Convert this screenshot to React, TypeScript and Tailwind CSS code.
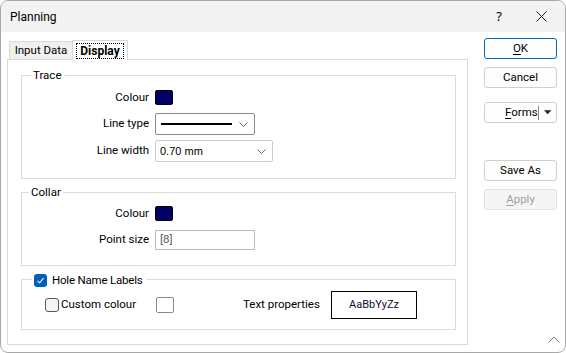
import React from "react";

const font = { fontFamily: 'Roboto, "Noto Sans", sans-serif' };

function Chevron({ className = "" }: { className?: string }) {
  return (
    <svg width="9" height="5" viewBox="0 0 9 5" className={className}>
      <path d="M0.5 0.5 L4.5 4.5 L8.5 0.5" fill="none" stroke="#6b6b6b" strokeWidth="1" />
    </svg>
  );
}

function Swatch({ color }: { color: string }) {
  return <div className="w-[18px] h-[15px] rounded-[2px] border border-black" style={{ background: color }} />;
}

function Button({ children, primary = false, disabled = false, className = "" }: { children: React.ReactNode; primary?: boolean; disabled?: boolean; className?: string }) {
  return (
    <div
      className={
        "h-[21px] w-[73px] rounded-[3px] flex items-center justify-center text-[11.5px] " +
        (primary
          ? "border border-[#0067c0] bg-[#fdfdfd] text-black"
          : disabled
          ? "border border-[#e2e2e2] bg-[#f5f5f5] text-[#a0a0a0]"
          : "border border-[#d0d0d0] bg-[#fdfdfd] text-black") +
        " " +
        className
      }
    >
      {children}
    </div>
  );
}

export default function App() {
  return (
    <div
      className="w-[566px] h-[353px] bg-white border border-[#a8a8a8] rounded-t-[8px] rounded-b-[8px] overflow-hidden flex flex-col text-black relative text-[11.5px]"
      style={font}
    >
      {/* Title bar */}
      <div className="h-[31px] bg-[#f3f3f3] flex items-center shrink-0">
        <span className="ml-[9px] text-[12px]">Planning</span>
        <div className="ml-auto flex items-center">
          <span className="text-[13px] mr-[34px]" style={{ fontFamily: '"Noto Sans", sans-serif' }}>?</span>
          <svg width="11" height="11" viewBox="0 0 11 11" className="mr-[18px]">
            <path d="M0.5 0.5 L10.5 10.5 M10.5 0.5 L0.5 10.5" stroke="#1a1a1a" strokeWidth="1" />
          </svg>
        </div>
      </div>

      {/* Body */}
      <div className="flex flex-1">
        {/* Left: tabs + panel */}
        <div className="ml-[6px] mt-[7px] w-[461px] flex flex-col">
          <div className="flex items-end h-[20px] pl-[2px]">
            <div className="h-[18px] w-[64px] border border-b-0 border-[#d9d9d9] bg-[#f0f0f0] flex items-center justify-center">
              Input Data
            </div>
            <div className="h-[20px] w-[56px] -ml-[1px] border border-b-0 border-[#d9d9d9] bg-white flex items-center justify-center relative z-10 -mb-[1px]">
              <span className="text-[12px] font-bold border border-dotted border-black px-[3px] leading-[14px]">Display</span>
            </div>
          </div>
          <div className="h-[286px] border border-[#d9d9d9] bg-white flex flex-col pt-[15px] pl-[13px]">
            {/* Trace */}
            <div className="relative w-[435px] h-[104px] border border-[#dcdcdc]">
              <span className="absolute -top-[9px] left-[9px] bg-white px-[2px]">Trace</span>
              <div className="flex flex-col pt-[14px]">
                <div className="flex items-center h-[15px]">
                  <span className="w-[127px] text-right">Colour</span>
                  <div className="ml-[6px]"><Swatch color="#000066" /></div>
                </div>
                <div className="flex items-center h-[22px] mt-[8px]">
                  <span className="w-[127px] text-right">Line type</span>
                  <div className="ml-[6px] w-[100px] h-[22px] border border-[#8a8a8a] rounded-[2px] flex items-center bg-white">
                    <div className="ml-[5px] w-[71px] h-[2px] bg-black" />
                    <Chevron className="ml-[7px]" />
                  </div>
                </div>
                <div className="flex items-center h-[22px] mt-[5px]">
                  <span className="w-[127px] text-right">Line width</span>
                  <div className="ml-[6px] w-[118px] h-[22px] border border-[#cccccc] rounded-[2px] flex items-center bg-white">
                    <span className="ml-[4px]" style={{ fontFamily: '"Liberation Sans", Arial, sans-serif', fontSize: "11px" }}>0.70 mm</span>
                    <Chevron className="ml-auto mr-[6px]" />
                  </div>
                </div>
              </div>
            </div>

            {/* Collar */}
            <div className="relative w-[435px] h-[74px] border border-[#dcdcdc] mt-[13px]">
              <span className="absolute -top-[9px] left-[7px] bg-white px-[2px]">Collar</span>
              <div className="flex flex-col pt-[13px]">
                <div className="flex items-center h-[15px]">
                  <span className="w-[127px] text-right">Colour</span>
                  <div className="ml-[6px]"><Swatch color="#000066" /></div>
                </div>
                <div className="flex items-center h-[20px] mt-[9px]">
                  <span className="w-[127px] text-right">Point size</span>
                  <div className="ml-[6px] w-[100px] h-[20px] border border-[#bdbdbd] flex items-center bg-white">
                    <span className="ml-[4px] text-[#5a5a5a]">[8]</span>
                  </div>
                </div>
              </div>
            </div>

            {/* Hole Name Labels */}
            <div className="relative w-[435px] h-[51px] border border-[#dcdcdc] mt-[13px]">
              <div className="absolute -top-[8px] left-[10px] bg-white pl-[2px] pr-[4px] flex items-center">
                <div className="w-[13px] h-[13px] rounded-[3px] bg-[#005fb8] flex items-center justify-center">
                  <svg width="9" height="9" viewBox="0 0 9 9">
                    <path d="M1.5 4.8 L3.6 6.8 L7.6 2.2" fill="none" stroke="white" strokeWidth="1.1" />
                  </svg>
                </div>
                <span className="ml-[5px] tracking-[-0.2px]">Hole Name Labels</span>
              </div>
              <div className="flex items-center h-full pt-[1px]">
                <div className="ml-[23px] w-[14px] h-[14px] rounded-[3px] border border-[#5a5a5a] bg-[#f5f5f5]" />
                <span className="ml-[2px] w-[95px]">Custom colour</span>
                <div className="w-[18px] h-[16px] rounded-[2px] border border-[#8a8a8a] bg-white" />
                <span className="ml-[69px] w-[76px] whitespace-nowrap">Text properties</span>
                <div className="ml-[12px] w-[86px] h-[28px] border border-black flex items-center justify-center">
                  <span className="text-[11px] text-[#101030]">AaBbYyZz</span>
                </div>
              </div>
            </div>
          </div>
        </div>

        {/* Right: buttons */}
        <div className="ml-[16px] mt-[6px] flex flex-col">
          <Button primary><span className="underline underline-offset-2">O</span>K</Button>
          <Button className="mt-[8px]">Cancel</Button>
          <div className="mt-[14px] h-[21px] w-[73px] rounded-[3px] border border-[#d0d0d0] bg-[#fdfdfd] flex items-center">
            <span className="ml-[20px]"><span className="underline underline-offset-2">F</span>orms</span>
            <div className="ml-auto w-[1px] h-[14px] bg-[#8a8a8a]" />
            <svg width="8" height="5" viewBox="0 0 8 5" className="mx-[5px]">
              <path d="M0 0 L8 0 L4 4.5 Z" fill="#222" />
            </svg>
          </div>
          <Button className="mt-[37px]">Save As</Button>
          <Button disabled className="mt-[8px]"><span className="underline underline-offset-2">A</span>pply</Button>
        </div>
      </div>

      {/* size grip */}
      <svg width="12" height="7" viewBox="0 0 12 7" className="absolute right-[5px] bottom-[9px]">
        <path d="M0.5 6.5 L6 1 L11.5 6.5" fill="none" stroke="#7a7a7a" strokeWidth="1" />
      </svg>
    </div>
  );
}
